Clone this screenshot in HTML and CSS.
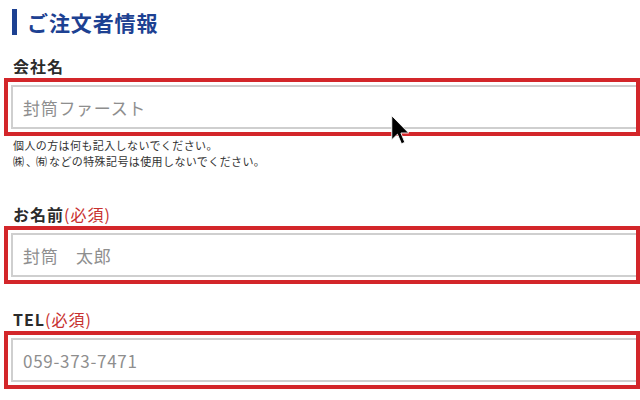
FILE: index.html
```html
<!DOCTYPE html>
<html lang="ja">
<head>
<meta charset="utf-8">
<title>ご注文者情報</title>
<link rel="stylesheet" href="styles.css">
</head>
<body>
<div class="page">
  <h2 class="title">ご注文者情報</h2>

  <div class="field field-company">
    <label class="label">会社名</label>
    <div class="frame"><input class="input" type="text" placeholder="封筒ファースト"></div>
    <p class="note">個人の方は何も記入しないでください。<br><span class="sym sym-big">㈱</span><span class="sym sym-comma">、</span><span class="sym sym-big">㈲</span>などの特殊記号は使用しないでください。</p>
  </div>

  <div class="field field-name">
    <label class="label">お名前<span class="req">(必須)</span></label>
    <div class="frame"><input class="input" type="text" placeholder="封筒　太郎"></div>
  </div>

  <div class="field field-tel">
    <label class="label">TEL<span class="req">(必須)</span></label>
    <div class="frame"><input class="input" type="text" placeholder="059-373-7471"></div>
  </div>

  <svg class="cursor" width="18" height="30" viewBox="0 0 12 20" aria-hidden="true">
    <path d="M0.5 0.5 L0.5 16.5 L4.3 12.8 L7 19.2 L9.2 18.2 L6.6 12 L11.8 12 Z" fill="#000" stroke="#fff" stroke-width="0.6"/>
  </svg>
</div>
</body>
</html>
```

FILE: styles.css
```css
html, body {
  margin: 0;
  padding: 0;
  background: #fff;
}

body {
  font-family: "Noto Sans CJK JP", "Noto Sans", sans-serif;
  color: #333;
}

.page {
  position: relative;
  width: 640px;
  height: 400px;
  overflow: hidden;
  padding-top: 9px;
  box-sizing: border-box;
}

.title {
  margin: 0 0 0 12px;
  padding-left: 10px;
  border-left: 5px solid #1d4192;
  height: 26px;
  line-height: 26px;
  font-size: 21px;
  letter-spacing: 0.9px;
  font-weight: 700;
  color: #1d4192;
}

.field {
  display: flex;
  flex-direction: column;
}

.field-company { margin-top: 21px; }
.field-name { margin-top: 35px; }
.field-tel { margin-top: 25px; }

.label {
  display: block;
  margin: 0 0 2px 13px;
  height: 20px;
  line-height: 20px;
  font-size: 16px;
  letter-spacing: 1px;
  font-weight: 700;
  color: #2b2b2b;
}

.req {
  font-weight: 400;
  color: #c8312f;
}

.frame {
  margin-left: 4px;
  height: 58px;
  box-sizing: border-box;
  border: 4px solid #d3262a;
  padding: 3px 0 3px 3px;
  display: flex;
}

.input {
  flex: 1;
  min-width: 0;
  height: 100%;
  box-sizing: border-box;
  margin: 0;
  border: 2px solid #cfcfcf;
  border-right: none;
  padding: 0 0 0 10px;
  font-family: "Noto Sans CJK JP", "Noto Sans", sans-serif;
  font-size: 17px;
  letter-spacing: 0.7px;
  color: #333;
  background: #fff;
  outline: none;
}

.input::placeholder {
  color: #8e8e8e;
  opacity: 1;
}

.note {
  margin: 1px 0 0 13px;
  font-size: 11px;
  letter-spacing: 0.4px;
  line-height: 16px;
  color: #333;
  text-spacing-trim: space-all;
}

.sym {
  display: inline-block;
  letter-spacing: 0;
}

.sym-big {
  width: 13px;
}

.sym-comma {
  width: 10px;
}

.cursor {
  position: absolute;
  left: 391px;
  top: 115px;
}
```
